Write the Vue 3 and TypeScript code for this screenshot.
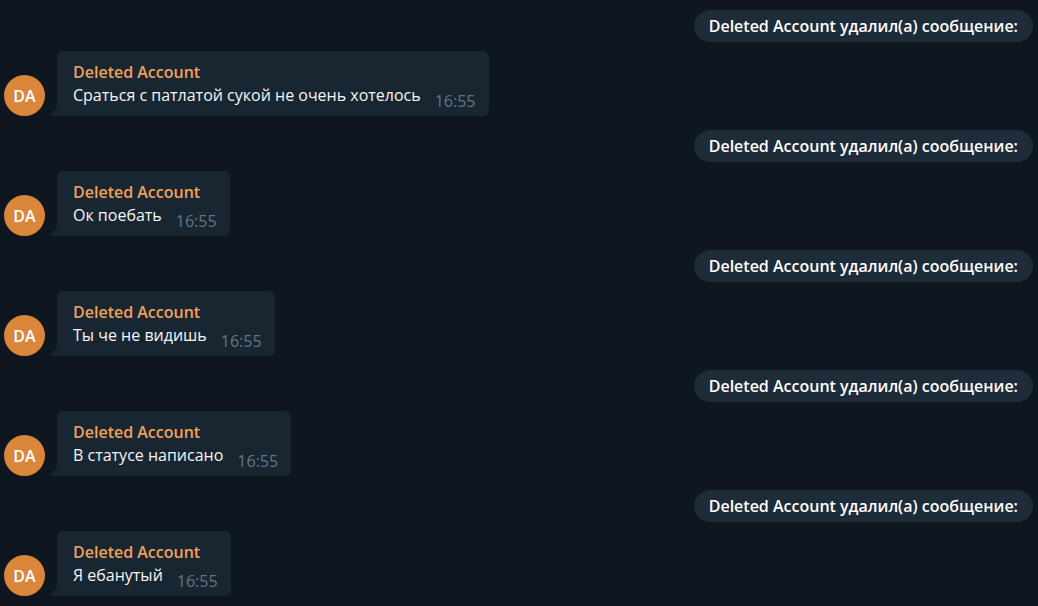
<script setup lang="ts">
interface Message {
  id: number
  text: string
  time: string
}

const author = 'Deleted Account'
const initials = 'DA'
const messages: Message[] = [
  { id: 1, text: 'Сраться с патлатой сукой не очень хотелось', time: '16:55' },
  { id: 2, text: 'Ок поебать', time: '16:55' },
  { id: 3, text: 'Ты че не видишь', time: '16:55' },
  { id: 4, text: 'В статусе написано', time: '16:55' },
  { id: 5, text: 'Я ебанутый', time: '16:55' },
]
</script>

<template>
  <main class="chat">
    <section v-for="message in messages" :key="message.id" class="entry">
      <p class="notice">{{ author }} удалил(а) сообщение:</p>
      <article class="message">
        <div class="avatar" aria-hidden="true">{{ initials }}</div>
        <div class="bubble">
          <svg class="tail" viewBox="0 0 8 12" aria-hidden="true">
            <path d="M8 0V12H1Q0 12 1 11Q8 7 8 0Z" fill="#182632" />
          </svg>
          <h2 class="author">{{ author }}</h2>
          <div class="line">
            <p class="text">{{ message.text }}</p>
            <time class="time">{{ message.time }}</time>
          </div>
        </div>
      </article>
    </section>
  </main>
</template>

<style>
body {
  background: #0e1620;
}
</style>

<style scoped>
.chat {
  display: flex;
  flex-direction: column;
  gap: 14px;
  padding: 10px 5px 10px 4px;
  font-family: 'Open Sans', 'Noto Sans', sans-serif;
  font-size: 16px;
  line-height: 24px;
  color: #f5f5f5;
}

.entry {
  display: flex;
  flex-direction: column;
  gap: 9px;
}

.notice {
  align-self: flex-end;
  margin: 0;
  padding: 4px 15px;
  border-radius: 16px;
  background: #1e2c39;
  color: #ffffff;
  font-weight: 600;
}

.message {
  display: flex;
  align-items: flex-end;
  gap: 12px;
}

.avatar {
  flex: none;
  width: 41px;
  height: 41px;
  border-radius: 50%;
  background: #db873b;
  color: #ffffff;
  font-weight: 600;
  line-height: 42px;
  text-align: center;
}

.bubble {
  position: relative;
  padding: 9px 13px 3px 16px;
  border-radius: 6px 6px 6px 0;
  background: #182632;
}

.tail {
  position: absolute;
  right: 100%;
  bottom: 0;
  width: 8px;
  height: 12px;
}

.author {
  margin: 0 0 -1px;
  color: #f0a05a;
  font-size: 16px;
  font-weight: 600;
}

.line {
  display: flex;
  align-items: flex-start;
  gap: 14px;
}

.text {
  margin: 0;
}

.time {
  margin-top: 6px;
  color: #667482;
}
</style>
